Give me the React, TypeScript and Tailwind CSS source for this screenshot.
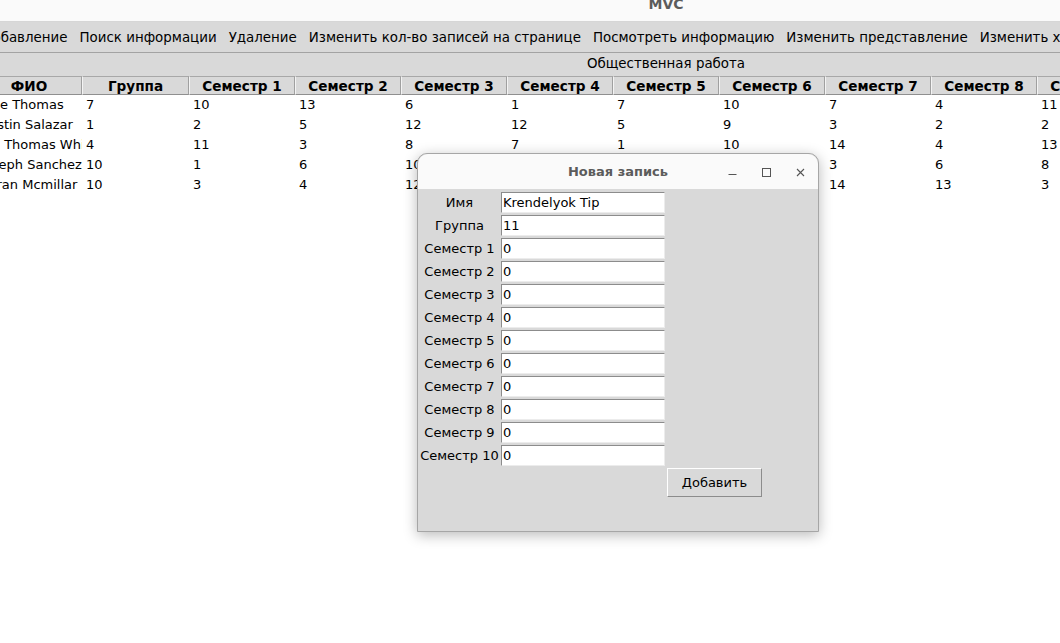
import React from "react";

const menu = [
  "Добавление",
  "Поиск информации",
  "Удаление",
  "Изменить кол-во записей на странице",
  "Посмотреть информацию",
  "Изменить представление",
  "Изменить хранилище",
];

const headers = [
  "ФИО",
  "Группа",
  "Семестр 1",
  "Семестр 2",
  "Семестр 3",
  "Семестр 4",
  "Семестр 5",
  "Семестр 6",
  "Семестр 7",
  "Семестр 8",
  "Семестр 9",
  "Семестр 10",
];

const rows: string[][] = [
  ["Jane Thomas", "7", "10", "13", "6", "1", "7", "10", "7", "4", "11", "5"],
  ["Austin Salazar", "1", "2", "5", "12", "12", "5", "9", "3", "2", "2", "8"],
  ["Ian Thomas White", "4", "11", "3", "8", "7", "1", "10", "14", "4", "13", "6"],
  ["Joseph Sanchez", "10", "1", "6", "10", "2", "9", "5", "3", "6", "8", "1"],
  ["Imran Mcmillar", "10", "3", "4", "12", "11", "6", "2", "14", "13", "3", "9"],
];

const fields = [
  ["Имя", "Krendelyok Tip"],
  ["Группа", "11"],
  ["Семестр 1", "0"],
  ["Семестр 2", "0"],
  ["Семестр 3", "0"],
  ["Семестр 4", "0"],
  ["Семестр 5", "0"],
  ["Семестр 6", "0"],
  ["Семестр 7", "0"],
  ["Семестр 8", "0"],
  ["Семестр 9", "0"],
  ["Семестр 10", "0"],
];

export default function App() {
  return (
    <div className="relative w-[1060px] h-[643px] overflow-hidden bg-white font-['DejaVu_Sans',sans-serif] text-[13px] text-black">
      <div className="-ml-[24px] w-[1380px] flex flex-col">
        {/* window title bar */}
        <div className="h-[22px] bg-[#fafafa] border-b border-[#d6d6d6] flex justify-center overflow-hidden">
          <span className="-mt-[3px] text-[14px] leading-[14px] font-bold text-[#5c5c5c]">MVC</span>
        </div>
        {/* menu bar */}
        <div className="h-[31px] pt-[2px] bg-[#d9d9d9] border-b border-[#a3a3a3] flex items-center text-[13.4px]">
          {menu.map((m) => (
            <span key={m} className="px-[6px] whitespace-nowrap leading-none">
              {m}
            </span>
          ))}
        </div>
        {/* label */}
        <div className="h-[23px] bg-[#d9d9d9] flex items-center justify-center text-[13.4px]">
          <span>Общественная работа</span>
        </div>
        {/* header */}
        <div className="flex bg-[#d9d9d9] text-[13.6px]">
          {headers.map((h, j) => (
            <div
              key={h}
              className={
                (j === 1 ? "w-[107px]" : "w-[106px]") +
                " h-[19px] pt-[1px] shrink-0 flex items-center justify-center font-bold border-t border-t-[#a8a8a8] border-l border-l-[#f4f4f4] border-r border-r-[#a0a0a0] border-b border-b-[#8f8f8f] whitespace-nowrap overflow-hidden"
              }
            >
              {h}
            </div>
          ))}
        </div>
        {/* rows */}
        <div className="flex flex-col bg-white text-[13px]">
          {rows.map((r, i) => (
            <div key={i} className="flex h-[20px] items-center">
              {r.map((c, j) => (
                <div
                  key={j}
                  className={(j === 1 ? "w-[107px]" : "w-[106px]") + " shrink-0 pl-[4px] whitespace-nowrap overflow-hidden"}
                >
                  {c}
                </div>
              ))}
            </div>
          ))}
        </div>
      </div>

      {/* dialog */}
      <div className="absolute left-[417px] top-[153px] w-[402px] h-[379px] flex flex-col rounded-t-[10px] border border-[#a6a6a6] shadow-[0_3px_14px_rgba(0,0,0,0.28)] bg-[#d9d9d9]">
        <div className="relative h-[35px] shrink-0 bg-[#fafafa] rounded-t-[10px] flex items-center justify-center">
          <span className="font-bold text-[13px] text-[#5c5c5c]">Новая запись</span>
          <div className="absolute right-[13px] top-[14px] flex items-center gap-[25px]">
            <svg width="9" height="9" viewBox="0 0 9 9">
              <line x1="0.5" y1="6.5" x2="8.5" y2="6.5" stroke="#555" strokeWidth="1" />
            </svg>
            <svg width="9" height="9" viewBox="0 0 9 9">
              <rect x="0.5" y="0.5" width="8" height="8" fill="none" stroke="#555" strokeWidth="1" />
            </svg>
            <svg width="9" height="9" viewBox="0 0 9 9">
              <path d="M1 1 L8 8 M8 1 L1 8" stroke="#555" strokeWidth="1.1" />
            </svg>
          </div>
        </div>
        <div className="flex-1 pt-[3px]">
          <div className="grid grid-cols-[83px_164px_auto] gap-y-[2px] items-center">
            {fields.map(([l, v]) => (
              <React.Fragment key={l}>
                <div className="text-center whitespace-nowrap">{l}</div>
                <div className="h-[21px] bg-white border border-t-[#8c8c8c] border-l-[#8c8c8c] border-r-[#ececec] border-b-[#ececec] pl-[1px] flex items-center leading-none">
                  {v}
                </div>
                <div />
              </React.Fragment>
            ))}
            <div />
            <div />
            <div className="ml-[2px]">
              <div className="w-[95px] h-[29px] flex items-center justify-center bg-[#d9d9d9] border border-t-white border-l-white border-r-[#8c8c8c] border-b-[#8c8c8c]">
                Добавить
              </div>
            </div>
          </div>
        </div>
      </div>
    </div>
  );
}
